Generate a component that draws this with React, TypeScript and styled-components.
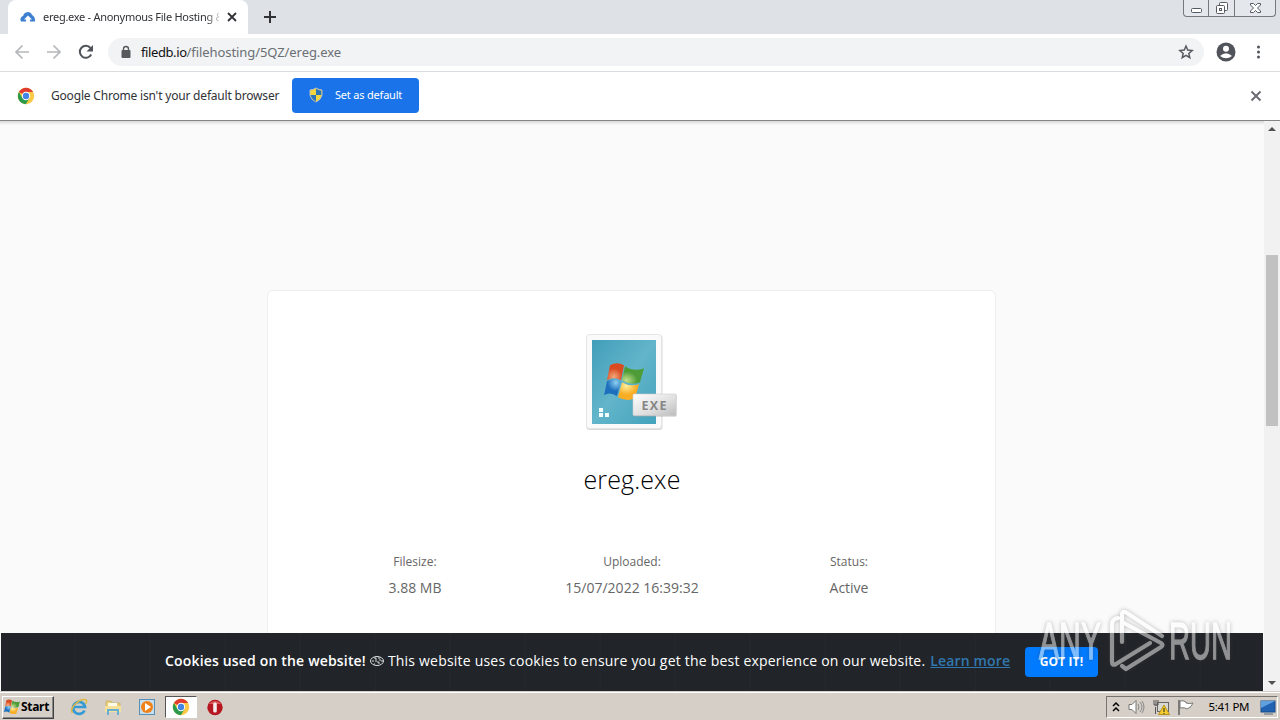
import styled, { createGlobalStyle } from "styled-components"

const GlobalStyle = createGlobalStyle`
  * { box-sizing: border-box; }
  body { margin: 0; overflow: hidden; background: #fff; }
  svg { display: block; flex: none; }
`

const Screen = styled.div`
  position: relative;
  display: flex;
  flex-direction: column;
  width: 1280px;
  height: 720px;
  overflow: hidden;
  font-family: "Noto Sans", sans-serif;
`

const Label = styled.span<{ $size: number; $color?: string; $track?: number; $weight?: number }>`
  font-size: ${(p) => p.$size}px;
  font-weight: ${(p) => p.$weight ?? 400};
  color: ${(p) => p.$color ?? "#303236"};
  letter-spacing: ${(p) => p.$track ?? 0}px;
  line-height: 20px;
  white-space: nowrap;
`

const TabStrip = styled.div`
  display: flex;
  flex: none;
  height: 34px;
  padding-left: 8px;
  background: #dee1e6;
`

const Tab = styled.div`
  display: flex;
  align-items: center;
  width: 240px;
  padding: 0 9px 0 12px;
  background: #fff;
  border-radius: 8px 8px 0 0;
`

const TabTitle = styled.div`
  display: flex;
  width: 176px;
  margin: 0 7px;
  overflow: hidden;
  mask-image: linear-gradient(90deg, #000 163px, transparent 180px);
`

const NewTab = styled.div`
  display: flex;
  align-items: center;
  padding-left: 15px;
`

const WindowButtons = styled.div`
  display: flex;
  height: 17px;
  margin-left: auto;
  margin-right: 4px;
  border: 1px solid #747980;
  border-top: 0;
  border-radius: 0 0 4px 4px;
  background: #e4e7eb;
`

const WindowButton = styled.div<{ $width: number }>`
  display: flex;
  align-items: center;
  justify-content: center;
  width: ${(p) => p.$width}px;
  & + & { border-left: 1px solid #747980; }
`

const Toolbar = styled.div`
  display: flex;
  flex: none;
  align-items: center;
  height: 38px;
  padding: 0 0 1px 14px;
  border-bottom: 1px solid #dadce0;
  background: #fff;
`

const NavIcons = styled.div`
  display: flex;
  gap: 16px;
  width: 94px;
`

const Omnibox = styled.div`
  display: flex;
  align-items: center;
  width: 1096px;
  height: 28px;
  padding: 0 10px 0 12px;
  border-radius: 14px;
  background: #f1f3f4;
`

const Url = styled.div`
  display: flex;
  flex: 1;
  margin-left: 9px;
`

const ToolbarEnd = styled.div`
  display: flex;
  align-items: center;
  gap: 20px;
  margin-left: 12px;
`

const InfoBar = styled.div`
  display: flex;
  flex: none;
  align-items: center;
  height: 49px;
  padding: 0 17px 1px 17px;
  border-bottom: 1px solid #858585;
  background: #fff;
`

const InfoText = styled.div`
  display: flex;
  width: 241px;
  margin-left: 16px;
`

const DefaultButton = styled.div`
  display: flex;
  align-items: center;
  gap: 12px;
  width: 127px;
  height: 35px;
  margin-right: auto;
  padding: 0 0 1px 17px;
  border-radius: 4px;
  background: #1a73e8;
`

const Viewport = styled.div`
  display: flex;
  flex: none;
  height: 570px;
  background: linear-gradient(#d8d8d8, #fafafa 4px);
`

const Page = styled.div`
  display: flex;
  flex-direction: column;
  width: 1264px;
  font-family: "Open Sans", sans-serif;
`

const PageBody = styled.div`
  display: flex;
  justify-content: center;
  height: 512px;
  padding: 169px 1px 0 0;
  overflow: hidden;
`

const Card = styled.div`
  display: flex;
  flex-direction: column;
  align-items: center;
  width: 729px;
  height: 480px;
  padding-top: 41px;
  border: 1px solid #eeeeee;
  border-radius: 6px;
  background: #fff;
`

const FileName = styled.div`
  display: flex;
  margin: 37px 0 0 1px;
`

const Facts = styled.div`
  display: grid;
  grid-template-columns: repeat(3, 217px);
  margin: 63px 0 0 1px;
`

const FactItem = styled.div`
  display: flex;
  flex-direction: column;
  align-items: center;
  gap: 6px;
`

const CookieBar = styled.div`
  display: flex;
  flex: none;
  align-items: center;
  height: 58px;
  margin: 0 1px;
  padding: 0 0 2px 164px;
  background-color: #212529;
  background-image: linear-gradient(90deg, transparent 73px, #25292d 74px, transparent 75px);
  background-size: 75px 58px;
`

const CookieText = styled.div`
  display: flex;
  align-items: center;
  width: 860px;
`

const LearnMore = styled(Label)`
  margin-left: 5px;
  text-decoration: underline;
`

const GotIt = styled.div`
  display: flex;
  align-items: center;
  justify-content: center;
  width: 73px;
  height: 30px;
  margin-top: 2px;
  padding-bottom: 1px;
  border-radius: 4px;
  background: #007bff;
`

const Scrollbar = styled.div`
  display: flex;
  flex-direction: column;
  align-items: center;
  width: 16px;
  padding: 5px 0;
  background: #f1f1f1;
`

const Thumb = styled.div`
  width: 12px;
  height: 171px;
  margin: 124px 0 auto;
  background: #c1c1c1;
`

const Taskbar = styled.div`
  display: flex;
  flex: none;
  align-items: center;
  height: 29px;
  padding: 2px 2px 0;
  border-top: 1px solid #d4d0c8;
  box-shadow: inset 0 1px #fff;
  background: #d6cfc7;
`

const StartButton = styled.div`
  display: flex;
  align-items: center;
  gap: 1px;
  width: 52px;
  height: 23px;
  padding: 0 0 1px 1px;
  border: 1px solid;
  border-color: #fff #404040 #404040 #fff;
  box-shadow: inset -1px -1px #888;
`

const QuickLaunch = styled.div`
  display: flex;
  align-items: center;
  margin-left: 8px;
`

const TaskItem = styled.div<{ $active?: boolean }>`
  display: flex;
  align-items: center;
  justify-content: center;
  width: ${(p) => (p.$active ? 32 : 34)}px;
  height: 22px;
  margin: ${(p) => (p.$active ? "0 1px" : "0")};
  border: ${(p) => (p.$active ? "1px solid" : "0")};
  border-color: #555 #fff #fff #555;
  background: ${(p) => (p.$active ? "#fff" : "transparent")};
`

const Tray = styled.div`
  display: flex;
  align-items: center;
  width: 172px;
  height: 22px;
  margin-left: auto;
  padding-left: 5px;
  border: 1px solid;
  border-color: #77736e #fff #fff #77736e;
`

const TrayIcons = styled.div`
  display: flex;
  align-items: center;
  gap: 8px;
  width: 97px;
`

const Watermark = styled.svg`
  position: absolute;
  left: 1030px;
  top: 600px;
  opacity: 0.5;
  filter: drop-shadow(0 0 2px rgba(60, 60, 60, 0.7));
`

const ChromeLogo = () => (
	<svg width="18" height="18" viewBox="0 0 18 18">
		<circle cx="9" cy="9" r="8.2" fill="#fbc945" />
		<path d="M9 9 1.900 4.900A8.200 8.200 0 0 1 16.100 4.900H9Z" fill="#e03c30" />
		<path d="M1.900 4.900A8.200 8.200 0 0 0 8.800 17.200L12.600 11H5.400Z" fill="#2b9b4b" />
		<circle cx="9" cy="9" r="4.2" fill="#fff" />
		<circle cx="9" cy="9" r="3.200" fill="#4285e4" />
	</svg>
)

const WindowsFlag = ({ size }: { size: number }) => (
	<svg width={size} height={size * 0.96} viewBox="0 0 40 38">
		<defs>
			<radialGradient id="red" cx=".4" cy=".8"><stop stopColor="#f4a97b" /><stop offset="1" stopColor="#d94a20" /></radialGradient>
			<radialGradient id="green" cx=".2" cy=".8"><stop stopColor="#c4df8a" /><stop offset="1" stopColor="#4d9c38" /></radialGradient>
			<radialGradient id="blue" cx=".7" cy=".2"><stop stopColor="#8fcff1" /><stop offset="1" stopColor="#1d6fbd" /></radialGradient>
			<radialGradient id="gold" cx=".4" cy=".2"><stop stopColor="#ffef9c" /><stop offset="1" stopColor="#f8ad25" /></radialGradient>
		</defs>
		<path d="M6 3Q13-1 20 3L17 18Q10 14 3 18Z" fill="url(#red)" />
		<path d="M21 4Q30 10 40 6L36 20Q27 24 18 18Z" fill="url(#green)" />
		<path d="M3 19Q10 15 17 19L13 34Q6 29 0 33Z" fill="url(#blue)" />
		<path d="M18 20Q26 25 35 22L31 36Q23 40 14 35Z" fill="url(#gold)" />
	</svg>
)

const ExeIcon = () => (
	<svg width="96" height="100" viewBox="0 0 96 100">
		<defs>
			<linearGradient id="paper" x2="1" y2="1"><stop stopColor="#419eb9" /><stop offset=".5" stopColor="#62b5ca" /><stop offset="1" stopColor="#43a2bd" /></linearGradient>
			<linearGradient id="badge" x2="1" y2="1"><stop stopColor="#fff" /><stop offset=".6" stopColor="#dedede" /><stop offset="1" stopColor="#bcbcbc" /></linearGradient>
		</defs>
		<rect x="2.500" y="3" width="76" height="95" rx="3" fill="#d9d9d9" />
		<rect x="2.500" y="2.500" width="75" height="94" rx="3" fill="#fafafa" stroke="#e5e5e5" />
		<rect x="8" y="8" width="64" height="84" fill="url(#paper)" />
		<g transform="translate(20 30)"><WindowsFlag size={40} /></g>
		<path d="M15 76h4v4h-4zM15 81h4v4h-4zM21 81h4v4h-4z" fill="#f5ffff" />
		<rect x="49.500" y="62.500" width="43" height="22" rx="1" fill="#aaa" opacity=".7" />
		<rect x="49" y="62" width="43" height="21.500" rx="1" fill="url(#badge)" stroke="#ccc" strokeWidth=".6" />
		<text x="57.500" y="78" fontFamily="Open Sans, sans-serif" fontSize="12.500" fontWeight="700" fill="#868686" textLength="25">EXE</text>
	</svg>
)

const Fact = ({ name, value }: { name: string; value: string }) => (
	<FactItem>
		<Label $size={12} $color="#666">{name}</Label>
		<Label $size={14} $color="#666">{value}</Label>
	</FactItem>
)

const App = () => (
	<Screen>
		<GlobalStyle />
		<TabStrip>
			<Tab>
				<svg width="16" height="16" viewBox="0 0 16 16">
					<path d="M6 12.500H1A4 4 0 0 1 3.200 6.700 4.700 4.700 0 0 1 12.100 6Q15.500 8 15 12.500H10V10.500H12L8 6.500 4 10.500H6Z" fill="#3f7fd0" />
				</svg>
				<TabTitle><Label $size={11} $track={-0.28}>ereg.exe - Anonymous File Hosting &amp;</Label></TabTitle>
				<svg width="12" height="12" viewBox="0 0 12 12" stroke="#303236" strokeWidth="1.800"><path d="m2 2 8 8M10 2l-8 8" /></svg>
			</Tab>
			<NewTab>
				<svg width="14" height="14" viewBox="0 0 14 14" stroke="#303236" strokeWidth="2"><path d="M7 1v12M1 7h12" /></svg>
			</NewTab>
			<WindowButtons>
				<WindowButton $width={24}>
					<svg width="13" height="13" viewBox="0 0 13 13"><rect x="1.500" y="6.500" width="10" height="4" rx="1" fill="#fff" stroke="#555b63" /></svg>
				</WindowButton>
				<WindowButton $width={26}>
					<svg width="14" height="14" viewBox="0 0 14 14" fill="#fff" stroke="#555b63"><rect x="4.500" y="1.500" width="8" height="8" rx="1" /><rect x="1.500" y="4.500" width="8" height="8" rx="1" /><rect x="4.500" y="7.500" width="2" height="2" /></svg>
				</WindowButton>
				<WindowButton $width={41}>
					<svg width="13" height="12" viewBox="0 0 13 12"><path d="M1.500 1.500h3l2 2 2-2h3v1.500L8.500 6l3 3v1.500h-3l-2-2-2 2h-3V9l3-3-3-3Z" fill="#fff" stroke="#555b63" /></svg>
				</WindowButton>
			</WindowButtons>
		</TabStrip>

		<Toolbar>
			<NavIcons>
				<svg width="16" height="16" viewBox="0 0 16 16" fill="none" stroke="#b4b6b9" strokeWidth="1.700"><path d="M15 8H2M8.500 1.500 2 8l6.500 6.500" /></svg>
				<svg width="16" height="16" viewBox="0 0 16 16" fill="none" stroke="#b4b6b9" strokeWidth="1.700"><path d="M1 8h13M7.500 1.500 14 8l-6.500 6.500" /></svg>
				<svg width="16" height="16" viewBox="0 0 16 16"><path d="M13.200 10.500A6 6 0 1 1 12.500 4" fill="none" stroke="#50545a" strokeWidth="2" /><path d="M15 1v6.500H8.500Z" fill="#50545a" /></svg>
			</NavIcons>
			<Omnibox>
				<svg width="12" height="14" viewBox="0 0 12 14"><rect x="1.500" y="5" width="9" height="8" rx="1" fill="#55595e" /><path d="M3.500 6V4a2.500 2.500 0 0 1 5 0v2" fill="none" stroke="#55595e" strokeWidth="1.400" /></svg>
				<Url>
					<Label $size={13} $track={-0.4} $color="#111">filedb.io</Label>
					<Label $size={13} $track={-0.08} $color="#6b6f74">/filehosting/5QZ/ereg.exe</Label>
				</Url>
				<svg width="16" height="16" viewBox="0 0 24 24" fill="none" stroke="#555960" strokeWidth="2.200"><path d="m12 3 2.600 6.100 6.600.6-5 4.400 1.500 6.500-5.700-3.400-5.700 3.400 1.500-6.500-5-4.400 6.600-.6Z" /></svg>
			</Omnibox>
			<ToolbarEnd>
				<svg width="20" height="20" viewBox="0 0 20 20"><circle cx="10" cy="10" r="9.500" fill="#50545a" /><circle cx="10" cy="6.800" r="3" fill="#fff" /><path d="M4 14Q10 8.500 16 14 10 18.500 4 14Z" fill="#fff" /></svg>
				<svg width="5" height="14" viewBox="0 0 5 14" fill="#50545a"><circle cx="2.500" cy="2" r="1.500" /><circle cx="2.500" cy="7" r="1.500" /><circle cx="2.500" cy="12" r="1.500" /></svg>
			</ToolbarEnd>
		</Toolbar>

		<InfoBar>
			<ChromeLogo />
			<InfoText><Label $size={12} $track={-0.19}>Google Chrome isn't your default browser</Label></InfoText>
			<DefaultButton>
				<svg width="14" height="16" viewBox="0 0 14 16">
					<path d="M7 1Q10 3 13 3V8Q12 13 7 15 2 13 1 8V3Q4 3 7 1Z" fill="#f7d63b" stroke="#b7bdc0" />
					<path d="M7 8H1.700Q2.500 12.500 7 14.400ZM7 1.800V8h5.300V3.700Q9.500 3.500 7 1.800Z" fill="#2d75b9" />
				</svg>
				<Label $size={11} $track={-0.2} $color="#fff">Set as default</Label>
			</DefaultButton>
			<svg width="14" height="14" viewBox="0 0 14 14" stroke="#686b70" strokeWidth="1.900"><path d="m2.500 2.500 9 9M11.500 2.500l-9 9" /></svg>
		</InfoBar>

		<Viewport>
			<Page>
				<PageBody>
					<Card>
						<ExeIcon />
						<FileName><Label $size={25} $track={0.12} $weight={300} $color="#000">ereg.exe</Label></FileName>
						<Facts>
							<Fact name="Filesize:" value="3.88 MB" />
							<Fact name="Uploaded:" value="15/07/2022 16:39:32" />
							<Fact name="Status:" value="Active" />
						</Facts>
					</Card>
				</PageBody>
				<CookieBar>
					<CookieText>
						<Label $size={14} $weight={600} $color="#fff" $track={0.17}>Cookies used on the website!</Label>
						<svg width="22" height="14" viewBox="0 0 22 14" fill="none" stroke="#dee0e1"><ellipse cx="11" cy="7" rx="6.500" ry="4.500" /><path d="M6 7h2M8 4h2v2M12 4h2M11 8h2v2M15 7h2M8 10h1M9 7h2M13 6h2" /></svg>
						<Label $size={14} $color="#fff" $track={0.205}>This website uses cookies to ensure you get the best experience on our website.</Label>
						<LearnMore $size={14} $weight={600} $color="#3178af" $track={0.15}>Learn more</LearnMore>
					</CookieText>
					<GotIt><Label $size={12} $weight={700} $color="#fff" $track={0.1}>GOT IT!</Label></GotIt>
				</CookieBar>
			</Page>
			<Scrollbar>
				<svg width="8" height="5" viewBox="0 0 8 5"><path d="m0 5 4-4 4 4Z" fill="#505050" /></svg>
				<Thumb />
				<svg width="8" height="5" viewBox="0 0 8 5"><path d="m0 0 4 4 4-4Z" fill="#505050" /></svg>
			</Scrollbar>
		</Viewport>

		<Taskbar>
			<StartButton>
				<WindowsFlag size={16} />
				<Label $size={12} $weight={700} $color="#000" $track={-0.3}>Start</Label>
			</StartButton>
			<QuickLaunch>
				<TaskItem>
					<svg width="18" height="18" viewBox="0 0 18 18" fill="none"><path d="M14.500 12.500A6 6 0 1 1 15 9H4" stroke="#369bd4" strokeWidth="2.700" /><path d="M2.500 15C-1 11 8 1 15 1.500c3 0 1 4 .5 4.500" stroke="#dfb93e" strokeWidth="1.400" /></svg>
				</TaskItem>
				<TaskItem>
					<svg width="18" height="17" viewBox="0 0 18 17"><path d="M2 2h5l1 2h8v8H2Z" fill="#ebce71" stroke="#cdb77b" /><path d="M4 4h9v3H4Z" fill="#fffbe9" /><path d="M1 7h16v6H1Z" fill="#f5e19b" /><path d="M4 16v-5h10v5" fill="none" stroke="#67b0d2" strokeWidth="2" /></svg>
				</TaskItem>
				<TaskItem>
					<svg width="17" height="16" viewBox="0 0 17 16"><rect x=".5" y=".5" width="15" height="15" fill="#c8deed" stroke="#568fb7" /><circle cx="8" cy="8" r="6" fill="#ef8317" /><path d="M6 4v8l6-4Z" fill="#fff" /></svg>
				</TaskItem>
				<TaskItem $active><ChromeLogo /></TaskItem>
				<TaskItem>
					<svg width="17" height="17" viewBox="0 0 17 17"><circle cx="8" cy="8.500" r="7.700" fill="#b51620" /><path d="M1.500 5Q8-1 14.500 5Z" fill="#db5659" /><rect x="6.200" y="3.500" width="3.600" height="10" rx="1.500" fill="#f4eded" /></svg>
				</TaskItem>
			</QuickLaunch>
			<Tray>
				<TrayIcons>
					<svg width="8" height="12" viewBox="0 0 8 12" fill="none" stroke="#000" strokeWidth="1.500"><path d="m1 5 3-3 3 3M1 10l3-3 3 3" /></svg>
					<svg width="17" height="16" viewBox="0 0 17 16"><path d="M1 5.500h3l4-4v13l-4-4H1Z" fill="#fff" stroke="#777" /><path d="M10 5q2 3 0 6M12 3q4 5 0 10M14 2q4 6 0 12" fill="none" stroke="#888" /></svg>
					<svg width="17" height="16" viewBox="0 0 17 16"><rect x="4.500" y="3.500" width="11" height="9" fill="#d8d8d2" stroke="#666" /><path d="M2.500 15V8M1 1v5h4V1M3 1v6" fill="none" stroke="#555" /><path d="m11 6 5.500 9.500h-11Z" fill="#f5cd2d" stroke="#b8921a" /><path d="M11 9v4M11 14v1" stroke="#222" /></svg>
					<svg width="17" height="16" viewBox="0 0 17 16"><path d="M1 1v15" stroke="#666" strokeWidth="1.600" /><path d="M2 2q3-1 6 1v1q3 1 7 0-1 4-6 6-2-2-7-1Z" fill="#fff" stroke="#777" /></svg>
				</TrayIcons>
				<Label $size={11.5} $color="#000" $track={-0.4}>5:41 PM</Label>
				<svg width="28" height="16" viewBox="0 0 28 16"><rect x="12" y="2" width="14" height="11" fill="#2163b3" stroke="#184a86" /><path d="M12 2h14L12 9Z" fill="#5fa0dd" /><path d="M15 15h9" stroke="#526979" /></svg>
			</Tray>
		</Taskbar>

		<Watermark width="230" height="80" viewBox="0 0 230 80">
			<g fontFamily="Liberation Sans Narrow, Liberation Sans, sans-serif" fontSize="51" fill="#fff" stroke="#fff" strokeWidth="1.300">
				<text x="9" y="59" textLength="62" lengthAdjust="spacingAndGlyphs">ANY</text>
				<text x="139" y="59" textLength="63" lengthAdjust="spacingAndGlyphs">RUN</text>
			</g>
			<path
				d="M88 18Q82 19 82 24V62Q82 66 86 64L120 43M92 42V15Q92 10 97 13L132 36M92 22 131 43Q134 45 131 47L96 69 92 66"
				fill="none"
				stroke="#fff"
				strokeWidth="4.200"
				strokeLinejoin="round"
				strokeLinecap="round"
			/>
		</Watermark>
	</Screen>
)

export default App
